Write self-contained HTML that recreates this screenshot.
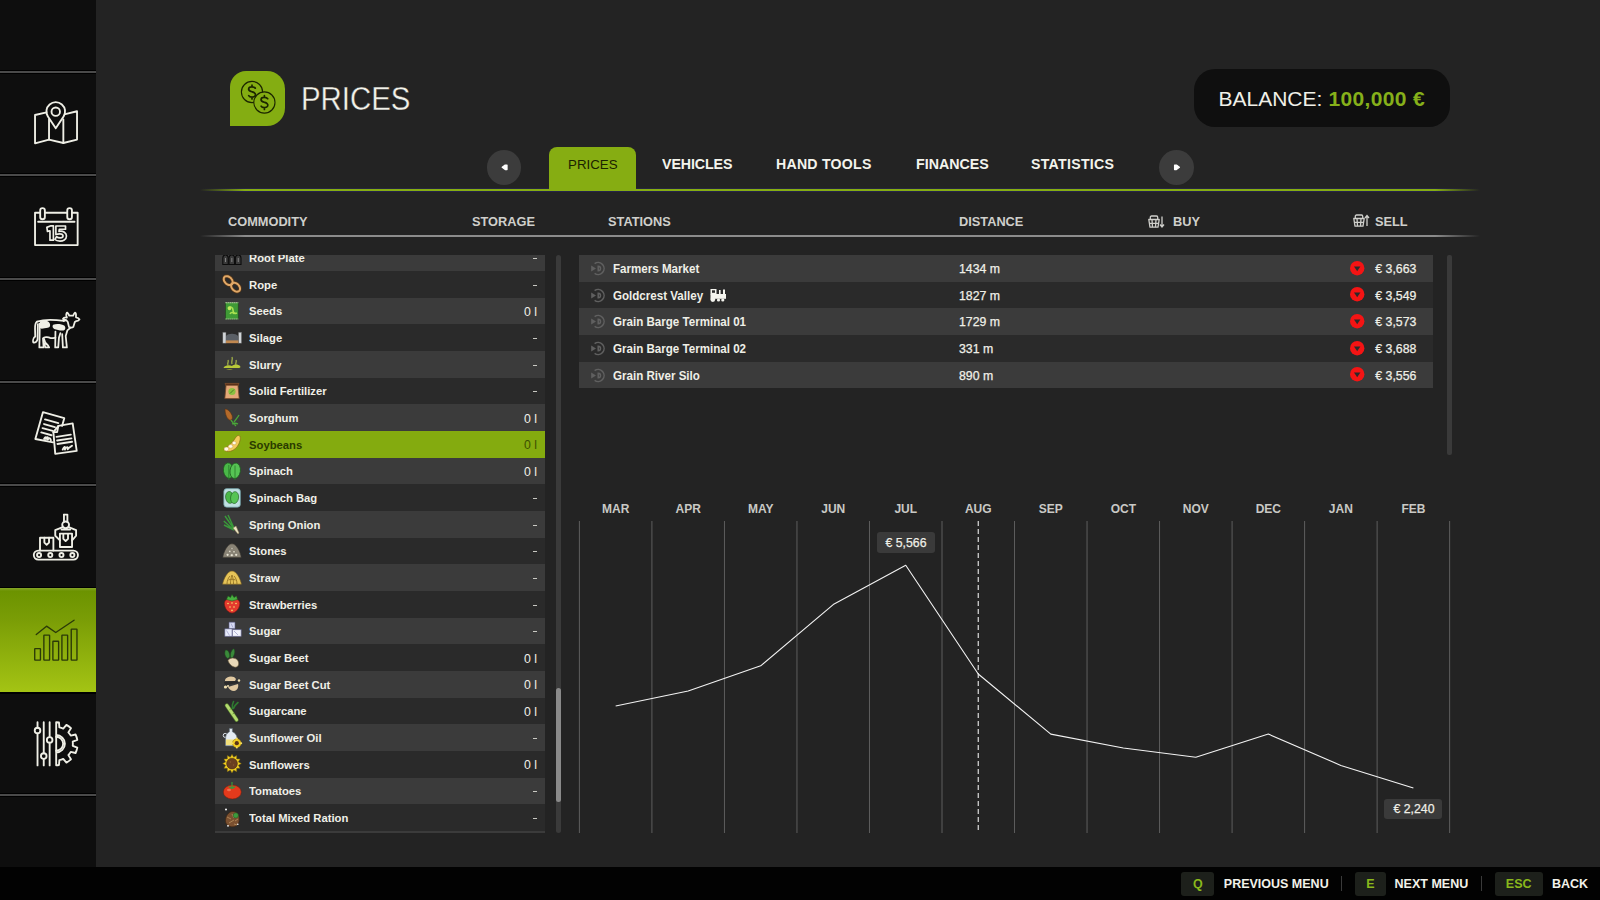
<!DOCTYPE html>
<html><head><meta charset="utf-8"><style>
*{margin:0;padding:0;box-sizing:border-box}
html,body{width:1600px;height:900px;overflow:hidden;background:#232323;font-family:"Liberation Sans",sans-serif;color:#eeeee8}
.a{position:absolute}
.t{position:absolute;line-height:1;white-space:nowrap}
svg{position:absolute;overflow:visible}
</style></head><body>
<div class="a" style="left:0px;top:0px;width:96px;height:867px;background:#0e0e0e;"></div>
<div class="a" style="left:0px;top:70.3px;width:96px;height:1px;background:#000;"></div>
<div class="a" style="left:0px;top:71.3px;width:96px;height:1.5px;background:#4a4a4a;"></div>
<div class="a" style="left:0px;top:72.8px;width:96px;height:1px;background:#000;"></div>
<div class="a" style="left:0px;top:173.3px;width:96px;height:1px;background:#000;"></div>
<div class="a" style="left:0px;top:174.3px;width:96px;height:1.5px;background:#4a4a4a;"></div>
<div class="a" style="left:0px;top:175.8px;width:96px;height:1px;background:#000;"></div>
<div class="a" style="left:0px;top:277.3px;width:96px;height:1px;background:#000;"></div>
<div class="a" style="left:0px;top:278.3px;width:96px;height:1.5px;background:#4a4a4a;"></div>
<div class="a" style="left:0px;top:279.8px;width:96px;height:1px;background:#000;"></div>
<div class="a" style="left:0px;top:380.3px;width:96px;height:1px;background:#000;"></div>
<div class="a" style="left:0px;top:381.3px;width:96px;height:1.5px;background:#4a4a4a;"></div>
<div class="a" style="left:0px;top:382.8px;width:96px;height:1px;background:#000;"></div>
<div class="a" style="left:0px;top:483.3px;width:96px;height:1px;background:#000;"></div>
<div class="a" style="left:0px;top:484.3px;width:96px;height:1.5px;background:#4a4a4a;"></div>
<div class="a" style="left:0px;top:485.8px;width:96px;height:1px;background:#000;"></div>
<div class="a" style="left:0px;top:793.3px;width:96px;height:1px;background:#000;"></div>
<div class="a" style="left:0px;top:794.3px;width:96px;height:1.5px;background:#4a4a4a;"></div>
<div class="a" style="left:0px;top:795.8px;width:96px;height:1px;background:#000;"></div>
<div class="a" style="left:0px;top:587px;width:96px;height:1px;background:#000;"></div>
<div class="a" style="left:0px;top:588px;width:96px;height:104px;background:linear-gradient(#86a62a 0px,#6c9300 3px,#7a9d06 30%,#a4c414 100%);"></div>
<div class="a" style="left:0px;top:692px;width:96px;height:1.5px;background:#000;"></div>
<div class="a" style="left:230px;top:71px;width:55px;height:55px;background:#84ad12;border-radius:16px 18px 18px 0"></div>
<svg style="left:230px;top:71px" width="55" height="55" viewBox="0 0 55 55"><g fill="none" stroke="#1c2600" stroke-width="1.1"><circle cx="22" cy="21" r="10.6"/><circle cx="34.4" cy="31.5" r="10.6" fill="#84ad12"/></g><g fill="none" stroke="#1c2600" stroke-width="1.7" stroke-linecap="round"><path d="M25.3 17.2c-1-1.6-6-2.1-6.6.4-.6 2.3 2.4 2.9 3.6 3.3 1.6.5 3.8 1.4 3 3.6-.8 2.2-5.6 2-6.6.2M22 14.2v1.6M22 26.4v1.6"/><path d="M37.7 27.7c-1-1.6-6-2.1-6.6.4-.6 2.3 2.4 2.9 3.6 3.3 1.6.5 3.8 1.4 3 3.6-.8 2.2-5.6 2-6.6.2M34.4 24.7v1.6M34.4 36.9v1.6"/></g></svg>
<div class="t" style="left:301.30px;top:82.85px;font-size:32.5px;font-weight:normal;color:#f2f2ea;-webkit-text-stroke:0.35px #232323;transform:scaleX(0.904);transform-origin:0 0;">PRICES</div>
<div class="a" style="left:1194px;top:69px;width:256px;height:58px;background:#0f0f0f;border-radius:21px"></div>
<div class="t" style="left:1218.50px;top:88.27px;font-size:21px;font-weight:normal;color:#f0f0e8;">BALANCE:</div>
<div class="t" style="left:1328.50px;top:88.27px;font-size:21px;font-weight:bold;color:#86b01a;letter-spacing:0.35px;">100,000 €</div>
<div class="a" style="left:486.95px;top:150.25px;width:34.5px;height:34.5px;border-radius:50%;background:#3c3c3c"></div>
<div class="a" style="left:1158.9px;top:150.0px;width:35px;height:35px;border-radius:50%;background:#3c3c3c"></div>
<svg style="left:0;top:0" width="1600" height="900"><path d="M502.2 167.3L505.2 165.1H507V169.5H505.2Z" fill="#fff" stroke="#fff" stroke-width="1.3" stroke-linejoin="round"/><path d="M1179.4 167.3L1176.4 165.1H1174.6V169.5H1176.4Z" fill="#fff" stroke="#fff" stroke-width="1.3" stroke-linejoin="round"/></svg>
<div class="t" style="left:662.20px;top:157.00px;font-size:14.5px;font-weight:bold;color:#f4f4ec;letter-spacing:-0.1px;transform:scaleX(0.98);transform-origin:0 0;">VEHICLES</div>
<div class="t" style="left:775.70px;top:157.00px;font-size:14.5px;font-weight:bold;color:#f4f4ec;letter-spacing:0.25px;transform:scaleX(0.975);transform-origin:0 0;">HAND TOOLS</div>
<div class="t" style="left:915.50px;top:157.00px;font-size:14.5px;font-weight:bold;color:#f4f4ec;letter-spacing:0px;transform:scaleX(0.98);transform-origin:0 0;">FINANCES</div>
<div class="t" style="left:1030.80px;top:157.00px;font-size:14.5px;font-weight:bold;color:#f4f4ec;letter-spacing:0.3px;transform:scaleX(0.975);transform-origin:0 0;">STATISTICS</div>
<div class="a" style="left:200px;top:189px;width:1280px;height:2px;background:linear-gradient(90deg,rgba(134,173,18,0) 0px,#86ad12 45px,#86ad12 1235px,rgba(134,173,18,0) 1280px);"></div>
<div class="a" style="left:200px;top:191px;width:1280px;height:1px;background:linear-gradient(90deg,rgba(30,30,60,0) 0px,#24244a 45px,#24244a 1235px,rgba(30,30,60,0) 1280px);"></div>
<div class="a" style="left:200px;top:188px;width:1280px;height:1px;background:linear-gradient(90deg,rgba(30,30,60,0) 0px,#262640 45px,#262640 1235px,rgba(30,30,60,0) 1280px);"></div>
<div class="a" style="left:549px;top:147.3px;width:87px;height:43.7px;background:#86ad12;border-radius:8px 8px 0 0"></div>
<div class="t" style="left:442.80px;width:300px;text-align:center;top:157.89px;font-size:13.3px;font-weight:normal;color:#1a2200;">PRICES</div>
<div class="t" style="left:228.00px;top:215.04px;font-size:13.6px;font-weight:bold;color:#cfcfcb;transform:scaleX(0.94);transform-origin:0 0;">COMMODITY</div>
<div class="t" style="left:472.00px;top:215.04px;font-size:13.6px;font-weight:bold;color:#cfcfcb;transform:scaleX(0.94);transform-origin:0 0;">STORAGE</div>
<div class="t" style="left:608.00px;top:215.04px;font-size:13.6px;font-weight:bold;color:#cfcfcb;transform:scaleX(0.94);transform-origin:0 0;">STATIONS</div>
<div class="t" style="left:959.00px;top:215.04px;font-size:13.6px;font-weight:bold;color:#cfcfcb;transform:scaleX(0.94);transform-origin:0 0;">DISTANCE</div>
<div class="t" style="left:1173.00px;top:215.04px;font-size:13.6px;font-weight:bold;color:#cfcfcb;transform:scaleX(0.94);transform-origin:0 0;">BUY</div>
<div class="t" style="left:1374.60px;top:215.04px;font-size:13.6px;font-weight:bold;color:#cfcfcb;transform:scaleX(0.94);transform-origin:0 0;">SELL</div>
<div class="a" style="left:200px;top:235px;width:1280px;height:2px;background:linear-gradient(90deg,rgba(140,140,140,0) 0px,#8c8c8c 45px,#8c8c8c 1235px,rgba(140,140,140,0) 1280px);"></div>
<div class="a" style="left:215px;top:255px;width:330px;height:578px;overflow:hidden">
<div class="a" style="left:0;top:-10.667px;width:330px;height:26.667px;background:#3b3b3b"></div>
<div class="t" style="left:34px;top:-2.14px;font-size:11.8px;font-weight:bold;color:#f0f0e8;transform:scaleX(0.955);transform-origin:0 0">Root Plate</div>
<div class="a" style="left:317.5px;top:3px;width:4px;height:1.3px;background:#f0f0e8;opacity:0.8"></div>
<svg style="left:7px;top:-7.37px" width="20" height="20" viewBox="0 0 20 20"><g fill="#3a3a3a" stroke="#0c0c0c" stroke-width="1.1"><path d="M0.8 16.5V10C0.8 8 2 7 3.4 6.6 5 7 6.2 8 6.2 10V16.5z"/><path d="M7 16.5V10C7 8 8.2 7 9.8 6.6 11.4 7 12.6 8 12.6 10V16.5z"/><path d="M13.4 16.5V10C13.4 8 14.6 7 16.2 6.6 17.8 7 19 8 19 10V16.5z"/></g><g fill="#8a8a8a"><rect x="3" y="10" width="0.9" height="4"/><rect x="9.4" y="10" width="0.9" height="4"/><rect x="15.8" y="10" width="0.9" height="4"/></g></svg>
<div class="a" style="left:0;top:16.000px;width:330px;height:26.667px;background:#2a2a2a"></div>
<div class="t" style="left:34px;top:24.53px;font-size:11.8px;font-weight:bold;color:#f0f0e8;transform:scaleX(0.955);transform-origin:0 0">Rope</div>
<div class="a" style="left:317.5px;top:30px;width:4px;height:1.3px;background:#f0f0e8;opacity:0.8"></div>
<svg style="left:7px;top:19.30px" width="20" height="20" viewBox="0 0 20 20"><g fill="none" stroke-linecap="round"><g stroke="#5a3a1a" stroke-width="3.4"><ellipse cx="6.2" cy="6.6" rx="5.2" ry="3.6" transform="rotate(45 6.2 6.6)"/><ellipse cx="13.6" cy="13.2" rx="5.2" ry="3.6" transform="rotate(45 13.6 13.2)"/></g><g stroke="#e0a868" stroke-width="2" stroke-dasharray="1.6 0.8"><ellipse cx="6.2" cy="6.6" rx="5.2" ry="3.6" transform="rotate(45 6.2 6.6)"/><ellipse cx="13.6" cy="13.2" rx="5.2" ry="3.6" transform="rotate(45 13.6 13.2)"/></g></g></svg>
<div class="a" style="left:0;top:42.667px;width:330px;height:26.667px;background:#3b3b3b"></div>
<div class="t" style="left:34px;top:51.20px;font-size:11.8px;font-weight:bold;color:#f0f0e8;transform:scaleX(0.955);transform-origin:0 0">Seeds</div>
<div class="t" style="right:8px;top:51.12px;font-size:12.3px;font-weight:normal;color:#f0f0e8;letter-spacing:0px">0 l</div>
<svg style="left:7px;top:45.97px" width="20" height="20" viewBox="0 0 20 20"><rect x="3.6" y="1.4" width="12.6" height="16.8" fill="#3f9a36" stroke="#1d4a1a" stroke-width="0.6"/><path d="M3.6 1.6h12.6M3.6 18h12.6" stroke="#e8f0d0" stroke-width="1.2" stroke-dasharray="1 1"/><path d="M6 7c2-2 5-1 5 2s2 4 4 3M8 13c1-2 3-2 4 0" stroke="#a8e050" stroke-width="1.6" fill="none"/><circle cx="7.5" cy="7.5" r="1.8" fill="#c0e860"/></svg>
<div class="a" style="left:0;top:69.334px;width:330px;height:26.667px;background:#2a2a2a"></div>
<div class="t" style="left:34px;top:77.86px;font-size:11.8px;font-weight:bold;color:#f0f0e8;transform:scaleX(0.955);transform-origin:0 0">Silage</div>
<div class="a" style="left:317.5px;top:83px;width:4px;height:1.3px;background:#f0f0e8;opacity:0.8"></div>
<svg style="left:7px;top:72.63px" width="20" height="20" viewBox="0 0 20 20"><rect x="0.8" y="4.2" width="3.2" height="11" fill="#d0d4d8" stroke="#555" stroke-width="0.5"/><rect x="16.4" y="4.2" width="3.2" height="11" fill="#d0d4d8" stroke="#555" stroke-width="0.5"/><path d="M4 14V8C6 5 14 5 16 8V14z" fill="#5a5f66"/><rect x="4" y="12.4" width="12.4" height="2.8" fill="#c08850"/></svg>
<div class="a" style="left:0;top:96.001px;width:330px;height:26.667px;background:#3b3b3b"></div>
<div class="t" style="left:34px;top:104.53px;font-size:11.8px;font-weight:bold;color:#f0f0e8;transform:scaleX(0.955);transform-origin:0 0">Slurry</div>
<div class="a" style="left:317.5px;top:110px;width:4px;height:1.3px;background:#f0f0e8;opacity:0.8"></div>
<svg style="left:7px;top:99.30px" width="20" height="20" viewBox="0 0 20 20"><path d="M2 13c2-2 6-2 8-1 2-2 6-2 8 0 1 1 0 2-1 2H4c-2 0-3-0-2-1z" fill="#b8c838"/><path d="M4 16c2-1 5-1 7 0H4z" fill="#a0b030"/><path d="M6 11c-1-2 1-3 0-5M10 10c-1-3 1-4 0-7M14 11c-1-2 1-3 0-5" stroke="#a8b848" stroke-width="1.2" fill="none"/></svg>
<div class="a" style="left:0;top:122.668px;width:330px;height:26.667px;background:#2a2a2a"></div>
<div class="t" style="left:34px;top:131.20px;font-size:11.8px;font-weight:bold;color:#f0f0e8;transform:scaleX(0.955);transform-origin:0 0">Solid Fertilizer</div>
<div class="a" style="left:317.5px;top:136px;width:4px;height:1.3px;background:#f0f0e8;opacity:0.8"></div>
<svg style="left:7px;top:125.97px" width="20" height="20" viewBox="0 0 20 20"><path d="M3 2.4h14l-1 2.6 1.2 12.6H2.8L4 5z" fill="#e4a878" stroke="#7a4a2a" stroke-width="0.8"/><path d="M3.4 2.6h13.2v2H3.4z" fill="#5a3018"/><circle cx="10" cy="10.5" r="3.6" fill="#8ac040"/><path d="M8 12.5l4-4" stroke="#3a6a18" stroke-width="0.8"/></svg>
<div class="a" style="left:0;top:149.335px;width:330px;height:26.667px;background:#3b3b3b"></div>
<div class="t" style="left:34px;top:157.86px;font-size:11.8px;font-weight:bold;color:#f0f0e8;transform:scaleX(0.955);transform-origin:0 0">Sorghum</div>
<div class="t" style="right:8px;top:157.79px;font-size:12.3px;font-weight:normal;color:#f0f0e8;letter-spacing:0px">0 l</div>
<svg style="left:7px;top:152.64px" width="20" height="20" viewBox="0 0 20 20"><path d="M3 1.2c2-0.6 5 2 7 6 1 3 0 5-2 5-3-1-5-6-5-11z" fill="#b46a2a" stroke="#5a3010" stroke-width="0.6"/><path d="M9 12c1 2 3 4 5 6M10 16c2-1 4-1 6 0M12 14c2-3 4-5 5-7" stroke="#4aa838" stroke-width="1.3" fill="none"/></svg>
<div class="a" style="left:0;top:176.002px;width:330px;height:26.667px;background:#84ab0f"></div>
<div class="t" style="left:34px;top:184.53px;font-size:11.8px;font-weight:bold;color:#2a3a00;transform:scaleX(0.955);transform-origin:0 0">Soybeans</div>
<div class="t" style="right:8px;top:184.45px;font-size:12.3px;font-weight:normal;color:#3d5000;letter-spacing:0px">0 l</div>
<svg style="left:7px;top:179.30px" width="20" height="20" viewBox="0 0 20 20"><path d="M1.8 15.2C4 19.5 13 18 16.8 10 18.8 5.6 18.6 2.4 17.2 1.6 15.6 0.8 13.8 3 12 6 9.5 10 5.5 12.5 1.8 15.2z" fill="#f2cc5c" stroke="#8a6a18" stroke-width="0.7"/><g fill="#fffbe8" stroke="#b89040" stroke-width="0.4"><ellipse cx="4.4" cy="15" rx="2.4" ry="1.9"/><ellipse cx="8.6" cy="12.4" rx="2.2" ry="1.8"/><ellipse cx="12.2" cy="9" rx="2" ry="1.7"/></g></svg>
<div class="a" style="left:0;top:202.669px;width:330px;height:26.667px;background:#3b3b3b"></div>
<div class="t" style="left:34px;top:211.20px;font-size:11.8px;font-weight:bold;color:#f0f0e8;transform:scaleX(0.955);transform-origin:0 0">Spinach</div>
<div class="t" style="right:8px;top:211.12px;font-size:12.3px;font-weight:normal;color:#f0f0e8;letter-spacing:0px">0 l</div>
<svg style="left:7px;top:205.97px" width="20" height="20" viewBox="0 0 20 20"><g stroke="#1f5a1f" stroke-width="0.8"><ellipse cx="6.6" cy="9.6" rx="5.2" ry="7.8" fill="#4ab848" transform="rotate(-8 6.6 9.6)"/><ellipse cx="13.2" cy="9.8" rx="5.2" ry="7.8" fill="#56c454" transform="rotate(8 13.2 9.8)"/></g><path d="M6.8 4v15M13 4.5v14.5" stroke="#2a7a2a" stroke-width="0.8"/></svg>
<div class="a" style="left:0;top:229.336px;width:330px;height:26.667px;background:#2a2a2a"></div>
<div class="t" style="left:34px;top:237.87px;font-size:11.8px;font-weight:bold;color:#f0f0e8;transform:scaleX(0.955);transform-origin:0 0">Spinach Bag</div>
<div class="a" style="left:317.5px;top:243px;width:4px;height:1.3px;background:#f0f0e8;opacity:0.8"></div>
<svg style="left:7px;top:232.64px" width="20" height="20" viewBox="0 0 20 20"><rect x="1.8" y="0.6" width="16.6" height="18.6" rx="3" fill="#bfe0e2" stroke="#6a9aa0" stroke-width="0.7"/><g stroke="#1f5a1f" stroke-width="0.6"><ellipse cx="7.6" cy="9.4" rx="4" ry="6" fill="#4ab848" transform="rotate(-8 7.6 9.4)"/><ellipse cx="12.6" cy="9.6" rx="4" ry="6" fill="#56c454" transform="rotate(8 12.6 9.6)"/></g></svg>
<div class="a" style="left:0;top:256.003px;width:330px;height:26.667px;background:#3b3b3b"></div>
<div class="t" style="left:34px;top:264.53px;font-size:11.8px;font-weight:bold;color:#f0f0e8;transform:scaleX(0.955);transform-origin:0 0">Spring Onion</div>
<div class="a" style="left:317.5px;top:270px;width:4px;height:1.3px;background:#f0f0e8;opacity:0.8"></div>
<svg style="left:7px;top:259.30px" width="20" height="20" viewBox="0 0 20 20"><path d="M3 2l9 13M1.8 7l10 9M6 1l6 13M2 11l10 5" stroke="#3a9a3a" stroke-width="1.4"/><path d="M11 14l5 6 1-1-3-7z" fill="#f0e8c8" stroke="#8a7a50" stroke-width="0.5"/></svg>
<div class="a" style="left:0;top:282.670px;width:330px;height:26.667px;background:#2a2a2a"></div>
<div class="t" style="left:34px;top:291.20px;font-size:11.8px;font-weight:bold;color:#f0f0e8;transform:scaleX(0.955);transform-origin:0 0">Stones</div>
<div class="a" style="left:317.5px;top:296px;width:4px;height:1.3px;background:#f0f0e8;opacity:0.8"></div>
<svg style="left:7px;top:285.97px" width="20" height="20" viewBox="0 0 20 20"><path d="M0.8 16.4C1.5 11 5.5 2.8 10 2.8S18.5 11 19.2 16.4Z" fill="#8a8476" stroke="#3a3830" stroke-width="0.6"/><g fill="#e8e4d4" stroke="#4a463c" stroke-width="0.3"><circle cx="5.6" cy="13.8" r="1.4"/><circle cx="9.8" cy="14.2" r="1.4"/><circle cx="14.2" cy="13.8" r="1.4"/><circle cx="7.8" cy="10.4" r="1.1"/><circle cx="12" cy="10.8" r="1.1"/><circle cx="10" cy="7.4" r="0.9"/></g></svg>
<div class="a" style="left:0;top:309.337px;width:330px;height:26.667px;background:#3b3b3b"></div>
<div class="t" style="left:34px;top:317.87px;font-size:11.8px;font-weight:bold;color:#f0f0e8;transform:scaleX(0.955);transform-origin:0 0">Straw</div>
<div class="a" style="left:317.5px;top:323px;width:4px;height:1.3px;background:#f0f0e8;opacity:0.8"></div>
<svg style="left:7px;top:312.64px" width="20" height="20" viewBox="0 0 20 20"><path d="M0.6 16.2C1.5 11 5.5 3 10 3S18.5 11 19.4 16.2Z" fill="#e6c458" stroke="#7a6020" stroke-width="0.6"/><path d="M5 16c0-3 1-6 3-8M8.5 16c0-3 0.5-6 1.5-9M11.5 16c0-3-0.5-6-1.5-9M15 16c0-3-1-6-3-8M6.5 12c2-1 5-1 7 0" stroke="#8a6a20" stroke-width="0.8" fill="none"/></svg>
<div class="a" style="left:0;top:336.004px;width:330px;height:26.667px;background:#2a2a2a"></div>
<div class="t" style="left:34px;top:344.53px;font-size:11.8px;font-weight:bold;color:#f0f0e8;transform:scaleX(0.955);transform-origin:0 0">Strawberries</div>
<div class="a" style="left:317.5px;top:350px;width:4px;height:1.3px;background:#f0f0e8;opacity:0.8"></div>
<svg style="left:7px;top:339.30px" width="20" height="20" viewBox="0 0 20 20"><path d="M2.4 9.5C2.4 6 5.5 4.6 10 4.6S17.8 6 17.8 9.5C17.8 14.5 13.5 19 10 19S2.4 14.5 2.4 9.5z" fill="#e43a2e" stroke="#7a140c" stroke-width="0.6"/><path d="M4.5 5.5L6 2 8.5 3.5 10 0.6 12 3.5 14.5 2 15.5 5.5 10 7z" fill="#48b040" stroke="#1e5a1a" stroke-width="0.5"/><g fill="#f8e070"><circle cx="6" cy="9.5" r="0.8"/><circle cx="10" cy="9" r="0.8"/><circle cx="14" cy="9.5" r="0.8"/><circle cx="8" cy="13" r="0.8"/><circle cx="12" cy="13" r="0.8"/><circle cx="10" cy="16.4" r="0.8"/></g></svg>
<div class="a" style="left:0;top:362.671px;width:330px;height:26.667px;background:#3b3b3b"></div>
<div class="t" style="left:34px;top:371.20px;font-size:11.8px;font-weight:bold;color:#f0f0e8;transform:scaleX(0.955);transform-origin:0 0">Sugar</div>
<div class="a" style="left:317.5px;top:376px;width:4px;height:1.3px;background:#f0f0e8;opacity:0.8"></div>
<svg style="left:7px;top:365.97px" width="20" height="20" viewBox="0 0 20 20"><g stroke="#5a5a88" stroke-width="0.6"><path d="M7 1.2h6v6.4H7z" fill="#d6daf2"/><path d="M2.8 7.8h7.4v7.6H2.8z" fill="#e8ecfa"/><path d="M10.4 8.6h8.8v6.8h-8.8z" fill="#f2f4fc"/></g><path d="M9 2.5l2 4M4.5 9.5l3 5M12 10l4 4" stroke="#9a9ac8" stroke-width="0.7"/></svg>
<div class="a" style="left:0;top:389.338px;width:330px;height:26.667px;background:#2a2a2a"></div>
<div class="t" style="left:34px;top:397.87px;font-size:11.8px;font-weight:bold;color:#f0f0e8;transform:scaleX(0.955);transform-origin:0 0">Sugar Beet</div>
<div class="t" style="right:8px;top:397.79px;font-size:12.3px;font-weight:normal;color:#f0f0e8;letter-spacing:0px">0 l</div>
<svg style="left:7px;top:392.64px" width="20" height="20" viewBox="0 0 20 20"><path d="M5.8 10.5C3 9 2 5 3.5 2 6 1.5 8 5 7.8 9zM8.5 9.5C8 6 9 2.5 11.5 0.8 13.5 2 13 6.5 10.5 10z" fill="#3a8a3a" stroke="#1e4a1e" stroke-width="0.5"/><path d="M6 12.5C7.5 9.5 13 9 15.8 12.5 17.5 15.5 16.5 19 13.5 19.2 10 19 7 16 6 12.5z" fill="#e8d8b8" stroke="#6a5a3a" stroke-width="0.6"/></svg>
<div class="a" style="left:0;top:416.005px;width:330px;height:26.667px;background:#3b3b3b"></div>
<div class="t" style="left:34px;top:424.53px;font-size:11.8px;font-weight:bold;color:#f0f0e8;transform:scaleX(0.955);transform-origin:0 0">Sugar Beet Cut</div>
<div class="t" style="right:8px;top:424.46px;font-size:12.3px;font-weight:normal;color:#f0f0e8;letter-spacing:0px">0 l</div>
<svg style="left:7px;top:419.31px" width="20" height="20" viewBox="0 0 20 20"><path d="M3 6c1-4 9-5 11-1l-1 2H3z" fill="#e0c8a0"/><path d="M2 8l13-1 2 2-14 2z" fill="#2a2a2a"/><path d="M6 13l10-3c1 3-1 7-4 7-3 0-5-2-6-4z" fill="#e0c8a0"/><circle cx="3.5" cy="13" r="1.6" fill="#f0e0b0"/><circle cx="17" cy="6.5" r="1.2" fill="#f0e0b0"/><circle cx="6" cy="12" r="1" fill="#f0e0b0"/></svg>
<div class="a" style="left:0;top:442.672px;width:330px;height:26.667px;background:#2a2a2a"></div>
<div class="t" style="left:34px;top:451.20px;font-size:11.8px;font-weight:bold;color:#f0f0e8;transform:scaleX(0.955);transform-origin:0 0">Sugarcane</div>
<div class="t" style="right:8px;top:451.12px;font-size:12.3px;font-weight:normal;color:#f0f0e8;letter-spacing:0px">0 l</div>
<svg style="left:7px;top:445.97px" width="20" height="20" viewBox="0 0 20 20"><path d="M4.8 4.4l9.8 14.4" stroke="#5e8a30" stroke-width="4" stroke-linecap="round"/><path d="M4.8 4.4l9.8 14.4" stroke="#b4da70" stroke-width="2.8" stroke-linecap="round"/><path d="M7.6 8.6l1.6-1M10.6 13l1.6-1" stroke="#5e8a30" stroke-width="0.8"/><path d="M10.5 7.5C10 5 10.5 2.5 11.5 0.5M11.5 7.5C12.5 5 14 3 16 1.5" stroke="#2e7a30" stroke-width="1.6" fill="none" stroke-linecap="round"/></svg>
<div class="a" style="left:0;top:469.339px;width:330px;height:26.667px;background:#3b3b3b"></div>
<div class="t" style="left:34px;top:477.87px;font-size:11.8px;font-weight:bold;color:#f0f0e8;transform:scaleX(0.955);transform-origin:0 0">Sunflower Oil</div>
<div class="a" style="left:317.5px;top:483px;width:4px;height:1.3px;background:#f0f0e8;opacity:0.8"></div>
<svg style="left:7px;top:472.64px" width="20" height="20" viewBox="0 0 20 20"><circle cx="3.2" cy="7.4" r="2" fill="none" stroke="#dfe6ee" stroke-width="1"/><path d="M7.4 0.4h3v3.4c2.6 1 4.6 3.2 4.6 6.4v7.6H3.6v-7.6c0-3.2 1.6-5.4 3.8-6.4z" fill="#e4ebf2" stroke="#5e6e7c" stroke-width="0.6"/><path d="M3.9 11.5h10.8v5.6H3.9z" fill="#f2e07a"/><g fill="#f2cc20" stroke="#7a6010" stroke-width="0.4"><circle cx="14.8" cy="15.2" r="4.4"/></g><g fill="#f8e060"><circle cx="14.8" cy="10.6" r="1"/><circle cx="19.2" cy="15.2" r="1"/><circle cx="14.8" cy="19.6" r="1"/><circle cx="10.4" cy="15.2" r="1"/></g><circle cx="14.8" cy="15.2" r="2.1" fill="#5a3418"/></svg>
<div class="a" style="left:0;top:496.006px;width:330px;height:26.667px;background:#2a2a2a"></div>
<div class="t" style="left:34px;top:504.54px;font-size:11.8px;font-weight:bold;color:#f0f0e8;transform:scaleX(0.955);transform-origin:0 0">Sunflowers</div>
<div class="t" style="right:8px;top:504.46px;font-size:12.3px;font-weight:normal;color:#f0f0e8;letter-spacing:0px">0 l</div>
<svg style="left:7px;top:499.31px" width="20" height="20" viewBox="0 0 20 20"><polygon points="10.00,0.30 11.71,3.22 14.65,1.55 14.67,4.93 18.05,4.95 16.38,7.89 19.30,9.60 16.38,11.31 18.05,14.25 14.67,14.27 14.65,17.65 11.71,15.98 10.00,18.90 8.29,15.98 5.35,17.65 5.33,14.27 1.95,14.25 3.62,11.31 0.70,9.60 3.62,7.89 1.95,4.95 5.33,4.93 5.35,1.55 8.29,3.22" fill="#f2d020" stroke="#7a6010" stroke-width="0.5" stroke-linejoin="round"/><circle cx="10" cy="9.6" r="5.4" fill="#6a4020" stroke="#3a2010" stroke-width="0.5"/><g fill="#8a5a30"><circle cx="8.5" cy="8" r="0.7"/><circle cx="11.5" cy="11" r="0.7"/></g></svg>
<div class="a" style="left:0;top:522.673px;width:330px;height:26.667px;background:#3b3b3b"></div>
<div class="t" style="left:34px;top:531.20px;font-size:11.8px;font-weight:bold;color:#f0f0e8;transform:scaleX(0.955);transform-origin:0 0">Tomatoes</div>
<div class="a" style="left:317.5px;top:536px;width:4px;height:1.3px;background:#f0f0e8;opacity:0.8"></div>
<svg style="left:7px;top:525.97px" width="20" height="20" viewBox="0 0 20 20"><ellipse cx="10.3" cy="11" rx="9" ry="7" fill="#e43a1c" stroke="#7a1a08" stroke-width="0.5"/><path d="M6 5c2 1 3 1 4 0 1 1 2 1 4 0-1 2-3 3-4 3s-3-1-4-3z" fill="#3a9a3a"/><path d="M10 1v4" stroke="#3a9a3a" stroke-width="1.2"/><ellipse cx="7" cy="9" rx="2" ry="1.2" fill="#f07050"/></svg>
<div class="a" style="left:0;top:549.340px;width:330px;height:26.667px;background:#2a2a2a"></div>
<div class="t" style="left:34px;top:557.87px;font-size:11.8px;font-weight:bold;color:#f0f0e8;transform:scaleX(0.955);transform-origin:0 0">Total Mixed Ration</div>
<div class="a" style="left:317.5px;top:563px;width:4px;height:1.3px;background:#f0f0e8;opacity:0.8"></div>
<svg style="left:7px;top:552.64px" width="20" height="20" viewBox="0 0 20 20"><path d="M3.6 14C3 10 5 5.5 8.5 4 12 2.5 16 4.5 17 8.5 18 12.5 16.5 17.5 12.5 18.6 8.5 19.5 4.2 17.5 3.6 14z" fill="#7a5030" stroke="#3a2410" stroke-width="0.6"/><g stroke="#b08858" stroke-width="0.9" fill="none"><path d="M5 9l4 2M7 15l5-3M10 6l2 4M12 16l3 1M13 13l3-2"/></g><circle cx="13.8" cy="7.4" r="2.6" fill="#3c9a3c" stroke="#1e4a1e" stroke-width="0.4"/><circle cx="4" cy="1.4" r="1" fill="#fff"/><circle cx="6" cy="17.8" r="0.9" fill="#fff"/><circle cx="15.8" cy="16.2" r="0.8" fill="#fff"/></svg>
<div class="a" style="left:0;top:576.007px;width:330px;height:26.667px;background:#3b3b3b"></div>
<div class="t" style="left:34px;top:584.54px;font-size:11.8px;font-weight:bold;color:#f0f0e8;transform:scaleX(0.955);transform-origin:0 0">Triticale</div>
<div class="a" style="left:317.5px;top:590px;width:4px;height:1.3px;background:#f0f0e8;opacity:0.8"></div>
<svg style="left:7px;top:579.31px" width="20" height="20" viewBox="0 0 20 20"></svg>
</div>
<div class="a" style="left:556px;top:255px;width:5px;height:578px;background:#3a3a3a;border-radius:2.5px"></div>
<div class="a" style="left:556px;top:688px;width:5px;height:114px;background:#8a8a8a;border-radius:2.5px"></div>
<div class="a" style="left:579px;top:255.0px;width:854px;height:26.667px;background:#3b3b3b;"></div>
<div class="t" style="left:613.00px;top:263.10px;font-size:12px;font-weight:bold;color:#efefe7;transform:scaleX(0.965);transform-origin:0 0;">Farmers Market</div>
<div class="t" style="left:959.00px;top:263.05px;font-size:12.3px;font-weight:normal;color:#efefe7;-webkit-text-stroke:0.25px #efefe7;">1434 m</div>
<div class="t" style="left:1375.30px;top:263.05px;font-size:12.3px;font-weight:normal;color:#efefe7;-webkit-text-stroke:0.25px #efefe7;">€ 3,663</div>
<svg style="left:1349.7px;top:260.70px" width="14.4" height="14.4" viewBox="0 0 14.4 14.4"><circle cx="7.2" cy="7.2" r="7.2" fill="#f41414"/><path d="M4 5.4h6.4l-3.2 4.8z" fill="#2a2a2a"/></svg>
<svg style="left:590px;top:261.00px" width="16" height="15" viewBox="0 0 16 15"><g fill="none" stroke="#606060" stroke-width="1.5"><path d="M4.6 2.6A6 6 0 1 1 4.6 12.4"/><path d="M8.2 5.2A2.3 2.3 0 0 1 8.2 9.8Z"/></g><path d="M1.2 4.4L6 7.5L1.2 10.6z" fill="#606060"/></svg>
<div class="a" style="left:579px;top:281.667px;width:854px;height:26.667px;background:#2a2a2a;"></div>
<div class="t" style="left:613.00px;top:289.77px;font-size:12px;font-weight:bold;color:#efefe7;transform:scaleX(0.965);transform-origin:0 0;">Goldcrest Valley</div>
<div class="t" style="left:959.00px;top:289.72px;font-size:12.3px;font-weight:normal;color:#efefe7;-webkit-text-stroke:0.25px #efefe7;">1827 m</div>
<div class="t" style="left:1375.30px;top:289.72px;font-size:12.3px;font-weight:normal;color:#efefe7;-webkit-text-stroke:0.25px #efefe7;">€ 3,549</div>
<svg style="left:1349.7px;top:287.37px" width="14.4" height="14.4" viewBox="0 0 14.4 14.4"><circle cx="7.2" cy="7.2" r="7.2" fill="#f41414"/><path d="M4 5.4h6.4l-3.2 4.8z" fill="#2a2a2a"/></svg>
<svg style="left:590px;top:287.67px" width="16" height="15" viewBox="0 0 16 15"><g fill="none" stroke="#606060" stroke-width="1.5"><path d="M4.6 2.6A6 6 0 1 1 4.6 12.4"/><path d="M8.2 5.2A2.3 2.3 0 0 1 8.2 9.8Z"/></g><path d="M1.2 4.4L6 7.5L1.2 10.6z" fill="#606060"/></svg>
<div class="a" style="left:579px;top:308.334px;width:854px;height:26.667px;background:#3b3b3b;"></div>
<div class="t" style="left:613.00px;top:316.43px;font-size:12px;font-weight:bold;color:#efefe7;transform:scaleX(0.965);transform-origin:0 0;">Grain Barge Terminal 01</div>
<div class="t" style="left:959.00px;top:316.38px;font-size:12.3px;font-weight:normal;color:#efefe7;-webkit-text-stroke:0.25px #efefe7;">1729 m</div>
<div class="t" style="left:1375.30px;top:316.38px;font-size:12.3px;font-weight:normal;color:#efefe7;-webkit-text-stroke:0.25px #efefe7;">€ 3,573</div>
<svg style="left:1349.7px;top:314.03px" width="14.4" height="14.4" viewBox="0 0 14.4 14.4"><circle cx="7.2" cy="7.2" r="7.2" fill="#f41414"/><path d="M4 5.4h6.4l-3.2 4.8z" fill="#2a2a2a"/></svg>
<svg style="left:590px;top:314.33px" width="16" height="15" viewBox="0 0 16 15"><g fill="none" stroke="#606060" stroke-width="1.5"><path d="M4.6 2.6A6 6 0 1 1 4.6 12.4"/><path d="M8.2 5.2A2.3 2.3 0 0 1 8.2 9.8Z"/></g><path d="M1.2 4.4L6 7.5L1.2 10.6z" fill="#606060"/></svg>
<div class="a" style="left:579px;top:335.001px;width:854px;height:26.667px;background:#2a2a2a;"></div>
<div class="t" style="left:613.00px;top:343.10px;font-size:12px;font-weight:bold;color:#efefe7;transform:scaleX(0.965);transform-origin:0 0;">Grain Barge Terminal 02</div>
<div class="t" style="left:959.00px;top:343.05px;font-size:12.3px;font-weight:normal;color:#efefe7;-webkit-text-stroke:0.25px #efefe7;">331 m</div>
<div class="t" style="left:1375.30px;top:343.05px;font-size:12.3px;font-weight:normal;color:#efefe7;-webkit-text-stroke:0.25px #efefe7;">€ 3,688</div>
<svg style="left:1349.7px;top:340.70px" width="14.4" height="14.4" viewBox="0 0 14.4 14.4"><circle cx="7.2" cy="7.2" r="7.2" fill="#f41414"/><path d="M4 5.4h6.4l-3.2 4.8z" fill="#2a2a2a"/></svg>
<svg style="left:590px;top:341.00px" width="16" height="15" viewBox="0 0 16 15"><g fill="none" stroke="#606060" stroke-width="1.5"><path d="M4.6 2.6A6 6 0 1 1 4.6 12.4"/><path d="M8.2 5.2A2.3 2.3 0 0 1 8.2 9.8Z"/></g><path d="M1.2 4.4L6 7.5L1.2 10.6z" fill="#606060"/></svg>
<div class="a" style="left:579px;top:361.668px;width:854px;height:26.667px;background:#3b3b3b;"></div>
<div class="t" style="left:613.00px;top:369.77px;font-size:12px;font-weight:bold;color:#efefe7;transform:scaleX(0.965);transform-origin:0 0;">Grain River Silo</div>
<div class="t" style="left:959.00px;top:369.72px;font-size:12.3px;font-weight:normal;color:#efefe7;-webkit-text-stroke:0.25px #efefe7;">890 m</div>
<div class="t" style="left:1375.30px;top:369.72px;font-size:12.3px;font-weight:normal;color:#efefe7;-webkit-text-stroke:0.25px #efefe7;">€ 3,556</div>
<svg style="left:1349.7px;top:367.37px" width="14.4" height="14.4" viewBox="0 0 14.4 14.4"><circle cx="7.2" cy="7.2" r="7.2" fill="#f41414"/><path d="M4 5.4h6.4l-3.2 4.8z" fill="#2a2a2a"/></svg>
<svg style="left:590px;top:367.67px" width="16" height="15" viewBox="0 0 16 15"><g fill="none" stroke="#606060" stroke-width="1.5"><path d="M4.6 2.6A6 6 0 1 1 4.6 12.4"/><path d="M8.2 5.2A2.3 2.3 0 0 1 8.2 9.8Z"/></g><path d="M1.2 4.4L6 7.5L1.2 10.6z" fill="#606060"/></svg>
<svg style="left:710px;top:289px" width="17" height="13" viewBox="0 0 17 13"><g fill="#f4f4ee"><rect x="0.5" y="0" width="6" height="5.5"/><rect x="0.5" y="5" width="15.5" height="4.8"/><rect x="9" y="1" width="1.6" height="4"/><rect x="13" y="0.5" width="2" height="4.5"/><circle cx="2.8" cy="10.5" r="2.4"/><circle cx="8.5" cy="11" r="1.6"/><circle cx="12.8" cy="11" r="1.6"/></g><rect x="2" y="1.3" width="3" height="2.5" fill="#2b2b2b"/></svg>
<div class="a" style="left:1447px;top:255px;width:4.5px;height:200px;background:#3a3a3a;border-radius:2px"></div>
<div class="t" style="left:465.66px;width:300px;text-align:center;top:502.60px;font-size:12px;font-weight:bold;color:#c9c9c5;">MAR</div>
<div class="t" style="left:538.18px;width:300px;text-align:center;top:502.60px;font-size:12px;font-weight:bold;color:#c9c9c5;">APR</div>
<div class="t" style="left:610.70px;width:300px;text-align:center;top:502.60px;font-size:12px;font-weight:bold;color:#c9c9c5;">MAY</div>
<div class="t" style="left:683.22px;width:300px;text-align:center;top:502.60px;font-size:12px;font-weight:bold;color:#c9c9c5;">JUN</div>
<div class="t" style="left:755.74px;width:300px;text-align:center;top:502.60px;font-size:12px;font-weight:bold;color:#c9c9c5;">JUL</div>
<div class="t" style="left:828.26px;width:300px;text-align:center;top:502.60px;font-size:12px;font-weight:bold;color:#c9c9c5;">AUG</div>
<div class="t" style="left:900.78px;width:300px;text-align:center;top:502.60px;font-size:12px;font-weight:bold;color:#c9c9c5;">SEP</div>
<div class="t" style="left:973.30px;width:300px;text-align:center;top:502.60px;font-size:12px;font-weight:bold;color:#c9c9c5;">OCT</div>
<div class="t" style="left:1045.82px;width:300px;text-align:center;top:502.60px;font-size:12px;font-weight:bold;color:#c9c9c5;">NOV</div>
<div class="t" style="left:1118.34px;width:300px;text-align:center;top:502.60px;font-size:12px;font-weight:bold;color:#c9c9c5;">DEC</div>
<div class="t" style="left:1190.86px;width:300px;text-align:center;top:502.60px;font-size:12px;font-weight:bold;color:#c9c9c5;">JAN</div>
<div class="t" style="left:1263.38px;width:300px;text-align:center;top:502.60px;font-size:12px;font-weight:bold;color:#c9c9c5;">FEB</div>
<svg style="left:0;top:0" width="1600" height="900"><g stroke="#5e5e5e" stroke-width="1" fill="none"><path d="M579.40 521V833"/><path d="M651.92 521V833"/><path d="M724.44 521V833"/><path d="M796.96 521V833"/><path d="M869.48 521V833"/><path d="M942.00 521V833"/><path d="M1014.52 521V833"/><path d="M1087.04 521V833"/><path d="M1159.56 521V833"/><path d="M1232.08 521V833"/><path d="M1304.60 521V833"/><path d="M1377.12 521V833"/><path d="M1449.64 521V833"/></g><path d="M978.26 521V833" stroke="#dcdcdc" stroke-width="1.2" stroke-dasharray="5 3"/><polyline points="615.66,706 688.18,691 760.70,665.8 833.22,604.6 905.74,565.3 978.26,674 1050.78,734.1 1123.30,748 1195.82,757.3 1268.34,734.1 1340.86,765.4 1413.38,788.1" fill="none" stroke="#f2f2f2" stroke-width="1.1" stroke-linejoin="round"/></svg>
<div class="a" style="left:877px;top:532px;width:57.5px;height:20.5px;background:#3a3a3a;border-radius:3px"></div>
<div class="t" style="left:756.30px;width:300px;text-align:center;top:535.54px;font-size:13px;font-weight:normal;color:#efefe7;-webkit-text-stroke:0.25px #efefe7;transform:scaleX(0.944);transform-origin:50% 0;">€ 5,566</div>
<div class="a" style="left:1384px;top:798.7px;width:58.4px;height:20.5px;background:#3a3a3a;border-radius:3px"></div>
<div class="t" style="left:1263.80px;width:300px;text-align:center;top:802.34px;font-size:13px;font-weight:normal;color:#efefe7;-webkit-text-stroke:0.25px #efefe7;transform:scaleX(0.944);transform-origin:50% 0;">€ 2,240</div>
<svg style="left:26px;top:96px" width="60" height="56" viewBox="0 0 964 900"><g fill="none" stroke="#efefe6" stroke-width="30" stroke-linejoin="round" stroke-linecap="round"><path d="M330 262L145 305V760L370 700L600 755L820 700V245L632 290"/><path d="M370 375V700M600 375V755"/><path d="M478 520L352 330A150 150 0 1 1 604 330Z"/><circle cx="478" cy="252" r="68"/></g></svg>
<svg style="left:26px;top:200px" width="60" height="56" viewBox="0 0 964 900"><g fill="none" stroke="#efefe6" stroke-width="30" stroke-linejoin="round" stroke-linecap="round"><path d="M225 205H145V725H830V205H745M305 205H660"/><rect x="228" y="130" width="75" height="180" rx="37"/><rect x="663" y="130" width="75" height="180" rx="37"/><path d="M195 350H780"/></g><g fill="none" stroke="#efefe6" stroke-width="27" stroke-linejoin="round"><path d="M335 440L400 415H440V645H385V495L345 505Z"/><path d="M480 418H635V470H535L530 505C600 490 650 530 650 580C650 640 590 660 545 660C505 660 480 650 465 635L490 590C510 605 530 610 550 610C580 610 595 600 595 580C595 555 570 545 540 545C515 545 495 550 480 555Z"/></g></svg>
<svg style="left:26px;top:406px" width="60" height="56" viewBox="0 0 964 900"><g fill="none" stroke="#efefe6" stroke-width="30" stroke-linejoin="round" stroke-linecap="round"><path d="M435 585L150 530L272 100L615 195L580 320"/><path d="M305 215L520 275M290 290L465 340M265 355L430 400M245 425L410 470"/><path d="M290 530C310 490 330 490 320 530C340 490 360 490 350 540C370 510 390 510 400 550"/><path d="M520 320L750 280L815 720L470 770L440 420Z"/><path d="M520 320L500 420L440 420"/><path d="M490 495L720 460M500 555L730 520M505 610L740 575"/><path d="M590 700C610 650 640 640 625 700C650 650 680 650 670 695C690 660 720 655 740 640"/></g></svg>
<svg style="left:26px;top:509px" width="60" height="56" viewBox="0 0 964 900"><g fill="none" stroke="#efefe6" stroke-width="30" stroke-linejoin="round" stroke-linecap="round"><rect x="125" y="668" width="710" height="145" rx="72"/><circle cx="210" cy="740" r="33"/><circle cx="390" cy="740" r="33"/><circle cx="570" cy="740" r="33"/><circle cx="745" cy="740" r="33"/><path d="M225 668V462H440V668"/><path d="M295 462V540L332 575L370 540V462"/><rect x="545" y="395" width="195" height="215"/><path d="M600 400V480L637 515L675 480V400"/><path d="M610 90H665V205"/><path d="M610 90V205"/><circle cx="637" cy="255" r="55"/><path d="M590 290L470 340V430L545 505M685 290L805 340V430L740 505"/><path d="M570 330H710"/></g></svg>
<svg style="left:26px;top:612px" width="60" height="56" viewBox="0 0 964 900"><g fill="none" stroke="#2b3a08" stroke-width="22" stroke-linejoin="round" stroke-linecap="round"><rect x="140" y="588" width="92" height="185" rx="6"/><rect x="287" y="372" width="92" height="401" rx="6"/><rect x="432" y="470" width="92" height="303" rx="6"/><rect x="577" y="372" width="92" height="401" rx="6"/><rect x="727" y="275" width="92" height="498" rx="6"/><path d="M165 362L330 228L478 330L772 132"/></g></svg>
<svg style="left:26px;top:715px" width="60" height="56" viewBox="0 0 964 900"><g fill="none" stroke="#efefe6" stroke-width="30" stroke-linejoin="round" stroke-linecap="round"><path d="M185 115V205M185 295V810M285 115V615M285 705V810M380 115V355M380 445V810"/><circle cx="185" cy="250" r="45"/><circle cx="285" cy="660" r="45"/><circle cx="380" cy="400" r="45"/><path d="M485 117.0A345 345 0 0 1 530.0 120.0L536.1 198.9A268 268 0 0 1 598.3 219.1L649.6 158.8A345 345 0 0 1 722.5 211.7L681.0 279.2A268 268 0 0 1 719.4 332.1L796.4 313.5A345 345 0 0 1 824.2 399.1L751.0 429.3A268 268 0 0 1 751.0 494.7L824.2 524.9A345 345 0 0 1 796.4 610.5L719.4 591.9A268 268 0 0 1 681.0 644.8L722.5 712.3A345 345 0 0 1 649.6 765.2L598.3 704.9A268 268 0 0 1 536.1 725.1L530.0 804.0A345 345 0 0 1 485.0 807.0L485 807.0V117ZM485 322A140 140 0 0 1 485 602"/><path d="M485 350A112 112 0 0 1 485 574"/></g></svg>
<svg style="left:30px;top:308px" width="52" height="42" viewBox="0 0 1114 900"><g fill="none" stroke="#efefe6" stroke-width="38" stroke-linejoin="round" stroke-linecap="round"><path d="M150 292C300 245 560 255 725 278"/><path d="M150 295C112 318 106 380 108 450L112 612C75 640 55 700 70 738C110 752 150 720 162 670L168 345"/><path d="M205 335C208 420 208 500 206 570L200 845H292L278 650C300 625 380 615 430 640C470 650 510 640 545 635"/><path d="M300 660C310 720 350 780 385 800L410 845H330L305 760"/><path d="M545 505L540 845H605L620 640L650 540"/><path d="M690 560L705 845H790L765 600L800 480L870 420"/><path d="M725 278L780 262L705 232C720 205 760 200 790 205L778 165C772 125 785 98 800 100C820 118 832 148 842 165H925C935 140 945 110 962 100C980 106 990 140 985 180V200C1020 205 1050 222 1060 245C1040 270 1010 280 985 282L960 300L928 405C910 425 850 425 835 405L810 300L780 262"/></g><g fill="#efefe6"><path d="M215 285C290 255 380 270 420 320C445 370 430 420 380 425C330 430 290 440 250 445L210 430Z"/><path d="M495 360C560 330 680 340 740 380C770 420 760 470 720 480C660 490 580 470 520 450C480 430 475 390 495 360Z"/></g></svg>
<svg style="left:1147.5px;top:214px" width="20" height="16" viewBox="0 0 20 16"><g fill="none" stroke="#cfcfcb" stroke-width="1.3" stroke-linejoin="round"><path d="M2.3 5.5V3.2C2.3 2.5 2.8 2 3.5 2h5c.7 0 1.2.5 1.2 1.2v2.3"/><path d="M0.8 5.5h10.4l-1.2 7.6H2z"/><path d="M4 5.5l.5 7.6M8 5.5l-.5 7.6M1.4 9.3h9.2"/></g><path d="M14 2.5v10M12 10.5l2 2.5 2-2.5" stroke="#cfcfcb" stroke-width="1.3" fill="none"/></svg>
<svg style="left:1352.5px;top:213px" width="20" height="16" viewBox="0 0 20 16"><g fill="none" stroke="#cfcfcb" stroke-width="1.3" stroke-linejoin="round"><path d="M2.3 5.5V3.2C2.3 2.5 2.8 2 3.5 2h5c.7 0 1.2.5 1.2 1.2v2.3"/><path d="M0.8 5.5h10.4l-1.2 7.6H2z"/><path d="M4 5.5l.5 7.6M8 5.5l-.5 7.6M1.4 9.3h9.2"/></g><path d="M14 13V2.5M12 5l2-2.5 2 2.5" stroke="#cfcfcb" stroke-width="1.3" fill="none"/></svg>
<div class="a" style="left:0px;top:867px;width:1600px;height:33px;background:#020202;"></div>
<div class="a" style="left:1181.2px;top:872px;width:33.3px;height:24.3px;background:#1d201b;border-radius:3px"></div>
<div class="t" style="left:1047.85px;width:300px;text-align:center;top:877.82px;font-size:12.5px;font-weight:bold;color:#8ab81c;">Q</div>
<div class="t" style="left:1223.80px;top:877.62px;font-size:12.5px;font-weight:bold;color:#f2f2ea;">PREVIOUS MENU</div>
<div class="a" style="left:1340.5px;top:876px;width:1px;height:15px;background:#3a3a3a;"></div>
<div class="a" style="left:1354.7px;top:872px;width:31.3px;height:24.3px;background:#1d201b;border-radius:3px"></div>
<div class="t" style="left:1220.35px;width:300px;text-align:center;top:877.82px;font-size:12.5px;font-weight:bold;color:#8ab81c;">E</div>
<div class="t" style="left:1394.60px;top:877.62px;font-size:12.5px;font-weight:bold;color:#f2f2ea;">NEXT MENU</div>
<div class="a" style="left:1480.5px;top:876px;width:1px;height:15px;background:#3a3a3a;"></div>
<div class="a" style="left:1494.7px;top:872px;width:48px;height:24.3px;background:#1d201b;border-radius:3px"></div>
<div class="t" style="left:1368.70px;width:300px;text-align:center;top:877.82px;font-size:12.5px;font-weight:bold;color:#8ab81c;">ESC</div>
<div class="t" style="left:1552.00px;top:877.62px;font-size:12.5px;font-weight:bold;color:#f2f2ea;">BACK</div>
</body></html>
